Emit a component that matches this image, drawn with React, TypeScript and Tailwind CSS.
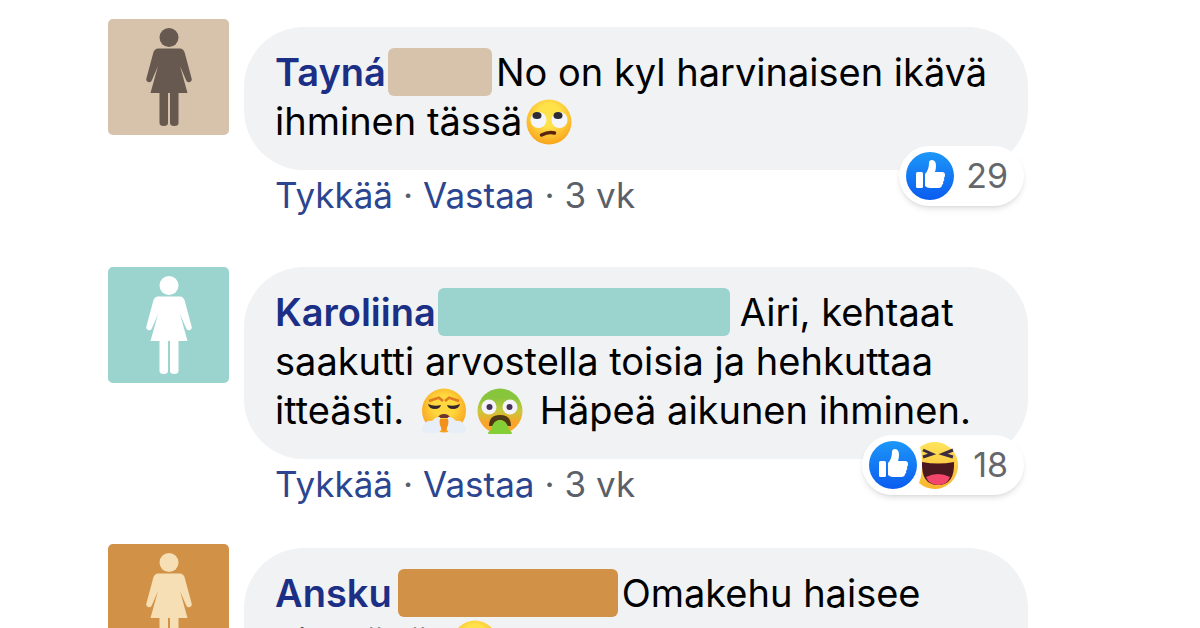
import type { ReactNode } from 'react';

interface Comment {
  id: string;
  name: string;
  tone: string;
  figure: string;
  mask: string;
  spacing: string;
  bubbleOffset: string;
  text: ReactNode;
  reactions: ReactNode;
  count?: number;
}

function Figure({ className }: { className: string }) {
  return (
    <svg viewBox="0 0 46 100" className={`h-[100px] w-[46px] ${className}`} fill="currentColor" aria-hidden="true">
      <circle cx="23" cy="10.500" r="9.500" />
      <path d="M12 21.500h22q3 0 4.500 3.500L45.500 51q1 3-1.500 4-3 1-4-2L34 39l7.500 27H32.500v30q0 3-4.200 3t-4.300-3V66h-2v30q0 3-4.200 3t-4.300-3V66H4.500L12 39 6 53q-1 3-4 2-2.500-1-1.500-4L7.500 25q1.500-3.500 4.500-3.500z" />
    </svg>
  );
}

function EyeRoll() {
  return (
    <svg viewBox="0 0 46 46" className="ml-1 inline-block size-[46px] align-[-10px]" role="img" aria-label="rolling eyes">
      <defs>
        <radialGradient id="roll" cx="50%" cy="35%" r="65%">
          <stop offset="0.4" stopColor="#ffe14a" />
          <stop offset="1" stopColor="#f9a31a" />
        </radialGradient>
      </defs>
      <circle cx="23" cy="23" r="22.500" fill="url(#roll)" />
      <circle cx="12.500" cy="21" r="8" fill="#f4f6fc" />
      <circle cx="33.500" cy="21" r="8" fill="#f4f6fc" />
      <ellipse cx="11" cy="16.500" rx="4.500" ry="3.500" fill="#2c2a35" />
      <ellipse cx="32" cy="16.500" rx="4.500" ry="3.500" fill="#2c2a35" />
      <path d="M15.500 36q7-3.500 13-2" stroke="#5a2410" strokeWidth="3.500" strokeLinecap="round" fill="none" />
    </svg>
  );
}

function Huffing() {
  return (
    <svg viewBox="0 0 46 46" className="ml-1.5 inline-block size-[46px] align-[-10px]" role="img" aria-label="huffing">
      <defs>
        <radialGradient id="huff" cx="50%" cy="40%" r="60%">
          <stop offset="0.4" stopColor="#ffd83f" />
          <stop offset="1" stopColor="#f8a01c" />
        </radialGradient>
      </defs>
      <circle cx="23" cy="22.500" r="22" fill="url(#huff)" />
      <path d="M8 13l9-3M38 13l-9-3M17 9l5 4M29 9l-5 4" stroke="#e07a20" strokeWidth="2.500" />
      <path d="M7 16q6 3 13 1-1 4-6 4-6 0-7-5zM39 16q-6 3-13 1 1 4 6 4 6 0 7-5z" fill="#33262a" />
      <path d="M17 30q1-4 6-4t6 4z" fill="#6e3430" />
      <path d="M19 29q-5 0-8 4-6-1-8 4-3 2-2 6 2 3 9 2 8 1 10-3 1-5-1-13zM27 29q5 0 8 4 6-1 8 4 3 2 2 6-2 3-9 2-8 1-10-3-1-5 1-13z" fill="#e8eef7" />
      <path d="M19 31h8q2 6-4 13-6-7-4-13z" fill="#f3901c" />
    </svg>
  );
}

function Sick() {
  return (
    <svg viewBox="0 0 46 46" className="mr-1.5 ml-2.5 inline-block size-[46px] align-[-10px]" role="img" aria-label="vomiting">
      <defs>
        <linearGradient id="sick" x1="0" y1="0" x2="0" y2="1">
          <stop offset="0.2" stopColor="#86c53c" />
          <stop offset="0.5" stopColor="#c8c83a" />
          <stop offset="0.75" stopColor="#f8a52a" />
        </linearGradient>
      </defs>
      <circle cx="23" cy="23" r="22.500" fill="url(#sick)" />
      <circle cx="12" cy="19" r="7.500" fill="#f4f3fc" />
      <circle cx="33" cy="19" r="7.500" fill="#f4f3fc" />
      <circle cx="12.500" cy="19" r="3" fill="#46335a" />
      <circle cx="32.500" cy="19" r="3" fill="#46335a" />
      <path d="M12 38q0-11 11-11t11 11h-4q-2-6-7-6t-7 6z" fill="#4d3a14" />
      <path d="M12 46q-3-1 2-4 2-10 9-10t9 10q5 3 2 4z" fill="#84cf35" />
    </svg>
  );
}

function Smile() {
  return (
    <svg viewBox="0 0 46 46" className="ml-3 inline-block size-[46px] align-[-10px]" role="img" aria-label="smile">
      <defs>
        <radialGradient id="smile" cx="50%" cy="35%" r="65%">
          <stop offset="0.4" stopColor="#ffe14a" />
          <stop offset="1" stopColor="#f9a31a" />
        </radialGradient>
      </defs>
      <circle cx="23" cy="23" r="22.500" fill="url(#smile)" />
      <circle cx="15" cy="18" r="3" fill="#5a3010" />
      <circle cx="31" cy="18" r="3" fill="#5a3010" />
      <path d="M12 28q11 12 22 0" stroke="#5a3010" strokeWidth="3" fill="none" />
    </svg>
  );
}

function LikeBadge() {
  return (
    <svg viewBox="0 0 48 48" className="size-12" role="img" aria-label="like">
      <defs>
        <linearGradient id="like" x1="0" y1="0" x2="0" y2="1">
          <stop offset="0" stopColor="#1d97f8" />
          <stop offset="1" stopColor="#0a5cf0" />
        </linearGradient>
      </defs>
      <circle cx="24" cy="24" r="24" fill="url(#like)" />
      <rect x="10" y="20" width="7" height="16" rx="1.500" fill="#fff" />
      <path d="M19 22q4-4 4-11 0-3 3-3 4 0 4 6 0 3-1 6h7q3 0 3 3 0 2-1 3 1 2-1 4 1 2-1 3 0 3-4 3h-8q-3 0-5-2z" fill="#fff" />
    </svg>
  );
}

function HahaBadge() {
  return (
    <svg viewBox="0 0 48 48" className="-ml-1 size-12" role="img" aria-label="haha">
      <defs>
        <linearGradient id="haha" x1="0" y1="0" x2="0" y2="1">
          <stop offset="0" stopColor="#ffe45c" />
          <stop offset="1" stopColor="#f8b52c" />
        </linearGradient>
      </defs>
      <path d="M7 6A23.500 23.500 0 1 1 6 42q3-7 3-18T7 6z" fill="url(#haha)" />
      <path d="M10 9l9 4-9 3M40 9l-10 4 10 3" stroke="#3d2b40" strokeWidth="3" fill="none" />
      <path d="M9 21q16 3 32 0 1 23-16 23T9 21z" fill="#4c1820" />
      <path d="M13 36q12-6 24 0-3 8-12 8t-12-8z" fill="#f2466a" />
    </svg>
  );
}

const comments: Comment[] = [
  {
    id: 'tayna',
    name: 'Tayná',
    tone: 'bg-[#d7c3ab]',
    figure: 'text-[#675850]',
    mask: 'w-[104px] ml-0.5 mr-1',
    spacing: 'h-[248px]',
    bubbleOffset: 'mt-2',
    text: <>No on kyl harvinaisen ikävä<br />ihminen tässä<EyeRoll /></>,
    reactions: <LikeBadge />,
    count: 29,
  },
  {
    id: 'karoliina',
    name: 'Karoliina',
    tone: 'bg-[#9bd4cf]',
    figure: 'text-white',
    mask: 'w-[292px] ml-0.5 mr-2.5',
    spacing: 'h-[277px]',
    bubbleOffset: '',
    text: <>Airi, kehtaat<br />saakutti arvostella toisia ja hehkuttaa<br />itteästi. <Huffing /><Sick /> Häpeä aikunen ihminen.</>,
    reactions: <><LikeBadge /><HahaBadge /></>,
    count: 18,
  },
  {
    id: 'ansku',
    name: 'Ansku',
    tone: 'bg-[#d19248]',
    figure: 'text-[#f6dfb4]',
    mask: 'w-[220px] ml-1.5 mr-1',
    spacing: '',
    bubbleOffset: 'mt-1',
    text: <>Omakehu haisee<br />hirveältä <Smile /></>,
    reactions: null,
  },
];

function CommentRow({ comment }: { comment: Comment }) {
  return (
    <article className={`flex items-start gap-[15px] ${comment.spacing}`}>
      <div className={`flex h-[116px] w-[121px] shrink-0 items-center justify-center rounded-[5px] ${comment.tone}`}>
        <Figure className={comment.figure} />
      </div>
      <div className={`min-w-0 flex-1 ${comment.bubbleOffset}`}>
        <div className="relative rounded-[60px] bg-[#f1f2f4] pt-[21px] pr-4 pb-6 pl-[31px] text-[38px] leading-[49px] whitespace-nowrap text-black">
          <a href="#" className="font-semibold text-[#1b2f86]">{comment.name}</a>
          <span className={`-my-2 inline-block h-12 rounded-md align-[-2px] ${comment.mask} ${comment.tone}`} />
          {comment.text}
          {comment.count && (
            <div className="absolute right-1 -bottom-9 flex h-[60px] items-center rounded-full bg-white pr-4 pl-[7px] shadow-md">
              {comment.reactions}
              <span className="ml-3 text-[34px] leading-none text-[#65676b]">{comment.count}</span>
            </div>
          )}
        </div>
        <div className="flex gap-2.5 pl-[31px] text-[35px] leading-[50px] text-[#5b6068]">
          <button className="text-[#2b4590]">Tykkää</button>
          <span>·</span>
          <button className="text-[#2b4590]">Vastaa</button>
          <span>·</span>
          <span>3 vk</span>
        </div>
      </div>
    </article>
  );
}

export default function App() {
  return (
    <main className="h-screen overflow-hidden bg-white pt-[19px] pr-[172px] pl-[108px] font-['Inter',sans-serif]">
      {comments.map((comment) => (
        <CommentRow key={comment.id} comment={comment} />
      ))}
    </main>
  );
}
